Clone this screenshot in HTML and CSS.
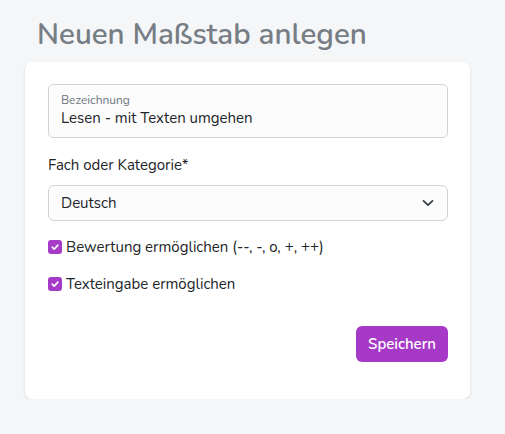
FILE: index.html
```html
<!DOCTYPE html>
<html lang="de">
<head>
<meta charset="utf-8">
<title>Neuen Maßstab anlegen</title>
<link rel="stylesheet" href="styles.css">
</head>
<body>
<main class="page">
  <h1 class="title">Neuen Maßstab anlegen</h1>
  <section class="card">
    <div class="floating">
      <span class="floating-label">Bezeichnung</span>
      <span class="floating-value">Lesen - mit Texten umgehen</span>
    </div>
    <div class="field-label">Fach oder Kategorie*</div>
    <div class="select">
      <span>Deutsch</span>
      <svg class="chevron" width="12" height="8" viewBox="0 0 12 8"><path d="M1.5 1.8 L6 6.2 L10.5 1.8" fill="none" stroke="#343a40" stroke-width="1.7" stroke-linecap="round" stroke-linejoin="round"/></svg>
    </div>
    <label class="check">
      <span class="box"><svg width="10" height="10" viewBox="0 0 10 10"><path d="M2.2 5.2 L4.2 7.1 L7.9 3.1" fill="none" stroke="#fff" stroke-width="1.6" stroke-linecap="round" stroke-linejoin="round"/></svg></span>
      <span>Bewertung ermöglichen (--, -, o, +, ++)</span>
    </label>
    <label class="check">
      <span class="box"><svg width="10" height="10" viewBox="0 0 10 10"><path d="M2.2 5.2 L4.2 7.1 L7.9 3.1" fill="none" stroke="#fff" stroke-width="1.6" stroke-linecap="round" stroke-linejoin="round"/></svg></span>
      <span>Texteingabe ermöglichen</span>
    </label>
    <div class="actions">
      <button class="btn">Speichern</button>
    </div>
  </section>
</main>
</body>
</html>
```

FILE: styles.css
```css
* { box-sizing: border-box; }
html, body { margin: 0; padding: 0; }
body {
  background: #f5f6f8;
  font-family: "Nunito", "Open Sans", sans-serif;
  color: #212529;
  font-size: 15px;
}
.page {
  padding: 16px 35px 0 25px;
}
.title {
  margin: 0 0 10px 12px;
  font-size: 29.6px;
  font-weight: 600;
  line-height: 36px;
  color: #767d84;
}
.card {
  background: #fff;
  border-radius: 7px;
  box-shadow: 0 1px 3px rgba(0,0,0,0.12);
  padding: 22px 22px 37px 23px;
  display: flex;
  flex-direction: column;
}
.floating {
  height: 54px;
  border: 1px solid #ced4da;
  border-radius: 5px;
  background: #fcfcfc;
  padding: 7px 12px 0;
  display: flex;
  flex-direction: column;
}
.floating-label {
  font-size: 12px;
  line-height: 16px;
  color: #6c757d;
}
.floating-value {
  font-size: 15px;
  line-height: 20px;
  color: #212529;
}
.field-label {
  margin-top: 17px;
  font-size: 15px;
  line-height: 20px;
}
.select {
  margin-top: 10px;
  height: 36px;
  border: 1px solid #ced4da;
  border-radius: 6px;
  background: #fcfcfc;
  padding: 0 13px 0 12px;
  display: flex;
  align-items: center;
  justify-content: space-between;
  font-size: 15px;
}
.check {
  display: flex;
  align-items: center;
  gap: 4px;
  font-size: 15px;
  line-height: 20px;
}
.select + .check { margin-top: 16px; }
.check + .check { margin-top: 17px; }
.box {
  width: 14px;
  height: 14px;
  border-radius: 3px;
  background: #a63bc8;
  display: flex;
  align-items: center;
  justify-content: center;
}
.actions {
  margin-top: 32px;
  display: flex;
  justify-content: flex-end;
}
.btn {
  font-family: inherit;
  font-size: 15px;
  font-weight: 600;
  color: #fff;
  background: #a63ac6;
  border: none;
  border-radius: 6px;
  height: 36px;
  width: 92px;
  padding: 0;
}
```
